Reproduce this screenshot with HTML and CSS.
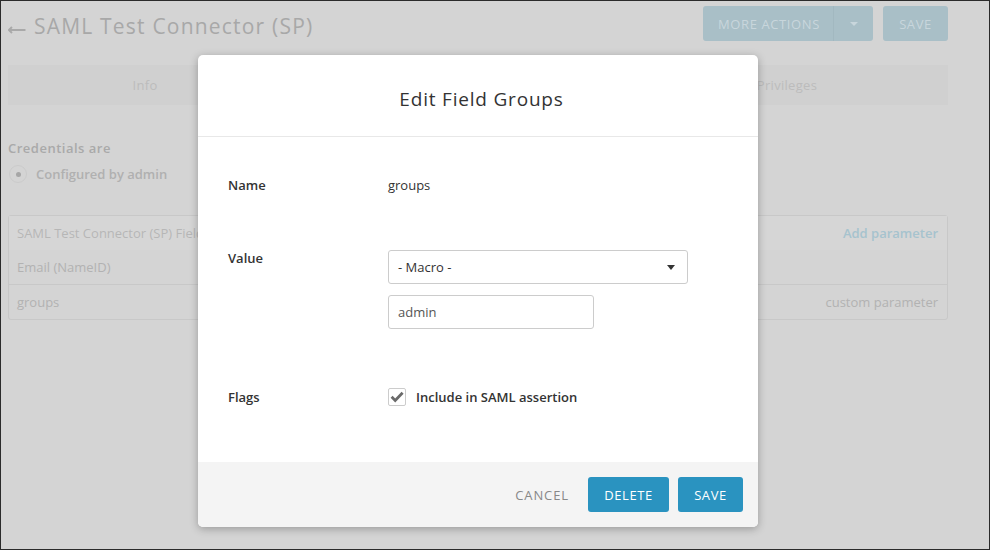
FILE: index.html
```
<!DOCTYPE html>
<html lang="en">
<head>
<meta charset="utf-8">
<title>Edit Field Groups</title>
<link rel="stylesheet" href="styles.css">
</head>
<body>
<div class="frame">
  <div class="page">
    <header class="page-header">
      <div class="title-wrap">
        <svg class="back" width="18" height="8" viewBox="0 0 18 8"><path d="M4 1 L0.8 4 L4 7 M1 4 H17.5" fill="none" stroke="#a9a9a9" stroke-width="2"/></svg>
        <h1 class="page-title">SAML Test Connector (SP)</h1>
      </div>
      <div class="header-actions">
        <div class="split-btn">
          <span class="split-label">MORE ACTIONS</span>
          <span class="split-caret"><span class="caret-light"></span></span>
        </div>
        <div class="hdr-btn">SAVE</div>
      </div>
    </header>

    <nav class="tabs">
      <div class="tab tab-info">Info</div>
      <div class="tab tab-mid"></div>
      <div class="tab tab-priv">Privileges</div>
    </nav>

    <div class="cred-title">Credentials are</div>
    <div class="radio-row">
      <span class="radio"><span class="radio-dot"></span></span>
      <span class="radio-label">Configured by admin</span>
    </div>

    <div class="param-table">
      <div class="param-row param-head">
        <span>SAML Test Connector (SP) Field</span>
        <span class="add-link">Add parameter</span>
      </div>
      <div class="param-row">
        <span>Email (NameID)</span>
        <span></span>
      </div>
      <div class="param-row param-last">
        <span>groups</span>
        <span>custom parameter</span>
      </div>
    </div>
  </div>

  <div class="modal">
    <div class="modal-header">Edit Field Groups</div>
    <div class="modal-body">
      <div class="field field-name">
        <div class="field-label">Name</div>
        <div class="field-value">groups</div>
      </div>
      <div class="field field-value-row">
        <div class="field-label">Value</div>
        <div class="field-controls">
          <div class="select">
            <span>- Macro -</span>
            <span class="caret-dark"></span>
          </div>
          <div class="text-input">admin</div>
        </div>
      </div>
      <div class="field field-flags">
        <div class="field-label">Flags</div>
        <div class="check-wrap">
          <span class="checkbox">
            <svg width="14" height="12" viewBox="0 0 14 12"><path d="M1.6 5.8 L5.2 9.4 L12.6 1.8" fill="none" stroke="#6a6a6a" stroke-width="2.8"/></svg>
          </span>
          <span class="check-label">Include in SAML assertion</span>
        </div>
      </div>
    </div>
    <div class="modal-footer">
      <span class="btn-cancel">CANCEL</span>
      <span class="btn-primary btn-delete">DELETE</span>
      <span class="btn-primary btn-save">SAVE</span>
    </div>
  </div>
</div>
</body>
</html>
```
FILE: styles.css
```
* { box-sizing: border-box; }
html, body { margin: 0; padding: 0; }
body {
  width: 990px;
  height: 550px;
  overflow: hidden;
  font-family: "Open Sans", "Lato", sans-serif;
  font-size: 13px;
}
.frame {
  position: relative;
  width: 990px;
  height: 550px;
  border: 1px solid #2b2b2b;
  background: #d4d4d4;
  overflow: hidden;
}
.page {
  padding: 5px 41px 0 7px;
}
.page-header {
  display: flex;
  justify-content: space-between;
  align-items: center;
  height: 35px;
}
.title-wrap {
  display: flex;
  align-items: center;
  gap: 8px;
  padding-top: 5px;
}
.back { margin-top: 7px; }
.page-title {
  margin: 0;
  font-weight: 400;
  font-size: 21px;
  color: #a8a8a8;
  letter-spacing: 1.2px;
}
.header-actions {
  display: flex;
  gap: 10px;
}
.split-btn {
  display: flex;
  height: 35px;
  width: 170px;
  background: #a9bfc7;
  border-radius: 3px;
  color: #c8d6dc;
  letter-spacing: 0.6px;
}
.split-label {
  width: 131px;
  display: flex;
  align-items: center;
  padding-left: 15px;
  border-right: 1px solid #a2b8c0;
}
.split-caret {
  flex: 1;
  display: flex;
  align-items: center;
  justify-content: center;
}
.caret-light {
  width: 0; height: 0;
  border-left: 4px solid transparent;
  border-right: 4px solid transparent;
  border-top: 4px solid #c8d6dc;
}
.hdr-btn {
  height: 35px;
  width: 65px;
  background: #a9bfc7;
  border-radius: 3px;
  color: #c8d6dc;
  display: flex;
  align-items: center;
  justify-content: center;
  letter-spacing: 0.6px;
}
.tabs {
  display: flex;
  margin-top: 24px;
  height: 40px;
  background: #d0d0d0;
}
.tab {
  display: flex;
  align-items: center;
  justify-content: center;
  color: #bcbcbc;
  font-size: 13px;
  letter-spacing: 0.3px;
}
.tab-info { width: 274px; }
.tab-mid { flex: 1; }
.tab-priv { width: 322px; }
.cred-title {
  margin-top: 34px;
  line-height: 18px;
  font-weight: 600;
  color: #a9a9a9;
  letter-spacing: 0.5px;
}
.radio-row {
  display: flex;
  align-items: center;
  margin-top: 8px;
  height: 18px;
  gap: 9px;
}
.radio {
  width: 18px; height: 18px;
  border-radius: 50%;
  border: 1px solid #cbcbcb;
  display: flex;
  align-items: center;
  justify-content: center;
  margin-left: 1px;
}
.radio-dot {
  width: 5px; height: 5px;
  border-radius: 50%;
  background: #a6a6a6;
}
.radio-label { color: #b0b0b0; font-weight: 600; }
.param-table {
  margin-top: 32px;
  border: 1px solid #c8c8c8;
  border-radius: 3px;
}
.param-row {
  display: flex;
  justify-content: space-between;
  align-items: center;
  height: 35px;
  padding: 0 9px 0 8px;
  color: #b2b2b2;
  border-bottom: 1px solid #c8c8c8;
}
.param-head {
  height: 34px;
  background: #d6d6d6;
  border-bottom: none;
  color: #b6b6b6;
}
.param-last { border-bottom: none; height: 34px; }
.add-link { color: #a6c3ce; font-weight: 600; }

.modal {
  position: absolute;
  left: 197px;
  top: 54px;
  width: 560px;
  height: 472px;
  background: #fff;
  border-radius: 5px;
  box-shadow: 0 2px 8px rgba(0,0,0,0.28);
  display: flex;
  flex-direction: column;
  overflow: hidden;
}
.modal-header {
  height: 82px;
  border-bottom: 1px solid #e8e8e8;
  display: flex;
  align-items: center;
  justify-content: center;
  font-size: 19px;
  color: #333;
  letter-spacing: 0.8px;
  padding-top: 7px;
  padding-left: 7px;
}
.modal-body {
  flex: 1;
  padding: 0 30px;
}
.field {
  display: flex;
  align-items: flex-start;
}
.field-label {
  width: 160px;
  line-height: 18px;
  font-weight: 600;
  color: #333;
}
.field-name { margin-top: 39px; }
.field-value { line-height: 18px; color: #333; }
.field-value-row { margin-top: 55px; }
.field-controls { margin-top: 1px; }
.select {
  width: 300px;
  height: 34px;
  border: 1px solid #cccccc;
  border-radius: 3px;
  display: flex;
  align-items: center;
  justify-content: space-between;
  padding: 0 12px 0 9px;
  color: #333;
}
.caret-dark {
  width: 0; height: 0;
  border-left: 4px solid transparent;
  border-right: 4px solid transparent;
  border-top: 5px solid #333;
}
.text-input {
  margin-top: 11px;
  width: 206px;
  height: 34px;
  border: 1px solid #cccccc;
  border-radius: 3px;
  display: flex;
  align-items: center;
  padding-left: 9px;
  color: #555;
}
.field-flags { margin-top: 59px; align-items: center; }
.check-wrap {
  display: flex;
  align-items: center;
  gap: 10px;
}
.checkbox {
  width: 18px; height: 18px;
  border: 1px solid #cccccc;
  border-radius: 2px;
  display: flex;
  align-items: center;
  justify-content: center;
}
.check-label { font-weight: 600; color: #333; }
.modal-footer {
  height: 65px;
  background: #f4f4f4;
  display: flex;
  align-items: center;
  justify-content: flex-end;
  padding-right: 15px;
  gap: 9px;
}
.btn-cancel {
  color: #888;
  letter-spacing: 0.9px;
  margin-right: 10px;
}
.btn-primary {
  height: 35px;
  background: #2a93c0;
  color: #fff;
  border-radius: 3px;
  display: flex;
  align-items: center;
  justify-content: center;
  letter-spacing: 0.6px;
}
.btn-delete { width: 81px; }
.btn-save { width: 65px; }
```
